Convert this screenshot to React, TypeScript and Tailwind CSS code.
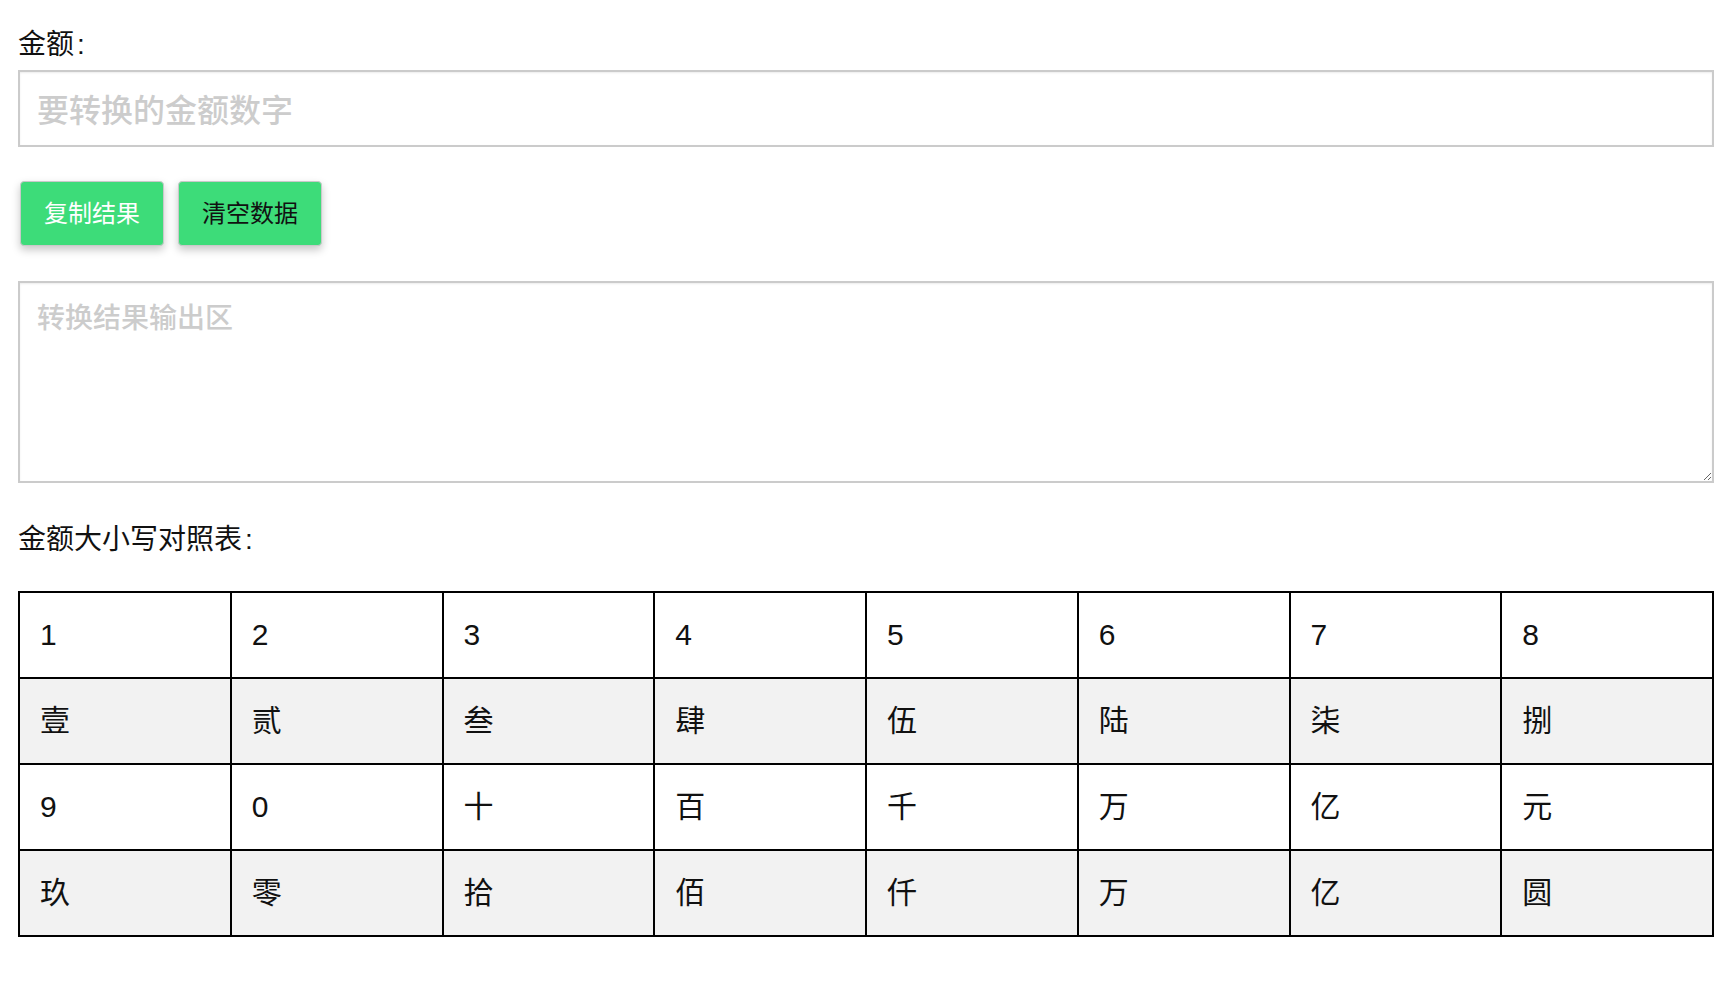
import React from "react";

const rows: string[][] = [
  ["1", "2", "3", "4", "5", "6", "7", "8"],
  ["壹", "贰", "叁", "肆", "伍", "陆", "柒", "捌"],
  ["9", "0", "十", "百", "千", "万", "亿", "元"],
  ["玖", "零", "拾", "佰", "仟", "万", "亿", "圆"],
];

const font = { fontFamily: '"Liberation Sans", "Noto Sans CJK SC", sans-serif' };

export default function App() {
  return (
    <div className="bg-white min-h-[990px] w-full px-[18px] pt-[25px] text-[#111]" style={font}>
      <div className="text-[28px] leading-[39px]">金额<span className="ml-[3px]">:</span></div>
      <input
        className="mt-[6px] block w-[1696px] h-[77px] border-2 border-[#cbcbcb] px-[17px] pt-[6px] text-[32px] outline-none placeholder:text-[#cccccc] placeholder:font-medium shadow-[inset_0_1px_2px_rgba(0,0,0,0.08)]"
        placeholder="要转换的金额数字"
      />
      <div className="mt-[34px] flex gap-[14px] pl-[2px]">
        <button className="w-[144px] h-[65px] rounded-[4px] bg-[#3ddc79] text-white text-[24px] border border-[#c9c9c9] shadow-[0_4px_8px_rgba(0,0,0,0.22)]">
          复制结果
        </button>
        <button className="w-[144px] h-[65px] rounded-[4px] bg-[#3ddc79] text-[#111] text-[24px] border border-[#c9c9c9] shadow-[0_4px_8px_rgba(0,0,0,0.22)]">
          清空数据
        </button>
      </div>
      <textarea
        className="mt-[35px] block w-[1696px] h-[202px] border-2 border-[#cbcbcb] px-[17px] pt-[15px] text-[28px] leading-[42px] outline-none placeholder:text-[#cccccc] placeholder:font-medium shadow-[inset_0_1px_2px_rgba(0,0,0,0.08)]"
        placeholder="转换结果输出区"
      />
      <div className="mt-[37px] text-[28px] leading-[39px]">金额大小写对照表<span className="ml-[3px]">:</span></div>
      <table className="mt-[32px] w-[1696px] table-fixed border-collapse border-2 border-black">
        <tbody>
          {rows.map((r, i) => (
            <tr key={i} className={i % 2 === 1 ? "bg-[#f2f2f2]" : "bg-white"}>
              {r.map((c, j) => (
                <td
                  key={j}
                  className="border-2 border-black h-[86px] px-[20px] text-[30px] leading-[36px] align-middle"
                >
                  {c}
                </td>
              ))}
            </tr>
          ))}
        </tbody>
      </table>
    </div>
  );
}
